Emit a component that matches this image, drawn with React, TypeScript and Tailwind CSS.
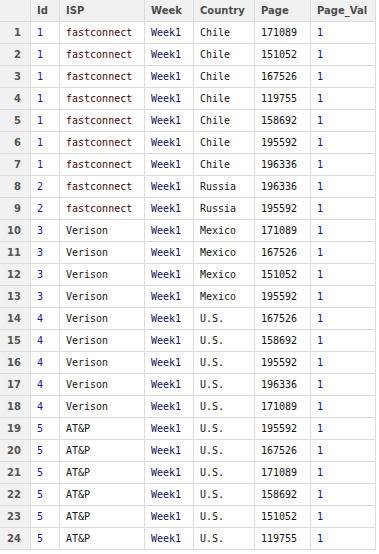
import React from 'react';

type Row = [number, string, string, string, string, number];

const rows: Row[] = [
  [1, 'fastconnect', 'Week1', 'Chile', '171089', 1],
  [1, 'fastconnect', 'Week1', 'Chile', '151052', 1],
  [1, 'fastconnect', 'Week1', 'Chile', '167526', 1],
  [1, 'fastconnect', 'Week1', 'Chile', '119755', 1],
  [1, 'fastconnect', 'Week1', 'Chile', '158692', 1],
  [1, 'fastconnect', 'Week1', 'Chile', '195592', 1],
  [1, 'fastconnect', 'Week1', 'Chile', '196336', 1],
  [2, 'fastconnect', 'Week1', 'Russia', '196336', 1],
  [2, 'fastconnect', 'Week1', 'Russia', '195592', 1],
  [3, 'Verison', 'Week1', 'Mexico', '171089', 1],
  [3, 'Verison', 'Week1', 'Mexico', '167526', 1],
  [3, 'Verison', 'Week1', 'Mexico', '151052', 1],
  [3, 'Verison', 'Week1', 'Mexico', '195592', 1],
  [4, 'Verison', 'Week1', 'U.S.', '167526', 1],
  [4, 'Verison', 'Week1', 'U.S.', '158692', 1],
  [4, 'Verison', 'Week1', 'U.S.', '195592', 1],
  [4, 'Verison', 'Week1', 'U.S.', '196336', 1],
  [4, 'Verison', 'Week1', 'U.S.', '171089', 1],
  [5, 'AT&P', 'Week1', 'U.S.', '195592', 1],
  [5, 'AT&P', 'Week1', 'U.S.', '167526', 1],
  [5, 'AT&P', 'Week1', 'U.S.', '171089', 1],
  [5, 'AT&P', 'Week1', 'U.S.', '158692', 1],
  [5, 'AT&P', 'Week1', 'U.S.', '151052', 1],
  [5, 'AT&P', 'Week1', 'U.S.', '119755', 1],
];

const headers = ['Id', 'ISP', 'Week', 'Country', 'Page', 'Page_Val'];

const cell = 'h-[22px] flex items-center border-r border-b border-[#dddddd] pl-[6px] whitespace-nowrap overflow-hidden';
const mono = "font-['DejaVu_Sans_Mono',monospace] text-[10px]";
const bold = "font-['DejaVu_Sans',sans-serif] text-[10px] font-bold";

export default function App() {
  return (
    <div className="w-[379px] h-[554px] bg-white overflow-hidden">
      <div className="grid grid-cols-[31px_29px_85px_49px_61px_56px_65px] w-[376px]">
        {/* header */}
        <div className={`${cell} bg-[#f1f1f1]`} />
        {headers.map((h) => (
          <div key={h} className={`${cell} ${bold} bg-[#f1f1f1] text-[#4d4d4d]`}>
            {h}
          </div>
        ))}

        {rows.map((r, i) => (
          <React.Fragment key={i}>
            <div className={`${cell} ${bold} bg-[#f1f1f1] text-[#555555] justify-end pr-[9px] pl-0`}>
              {i + 1}
            </div>
            <div className={`${cell} ${mono} text-[#1616a0]`}>{r[0]}</div>
            <div className={`${cell} ${mono} ${r[1] === 'fastconnect' ? 'text-[#3f0808]' : 'text-[#141414]'}`}>
              {r[1]}
            </div>
            <div className={`${cell} ${mono} text-[#121258]`}>{r[2]}</div>
            <div className={`${cell} ${mono} text-[#161616]`}>{r[3]}</div>
            <div className={`${cell} ${mono} text-[#111111]`}>{r[4]}</div>
            <div className={`${cell} ${mono} text-[#12127e]`}>{r[5]}</div>
          </React.Fragment>
        ))}
      </div>
    </div>
  );
}
